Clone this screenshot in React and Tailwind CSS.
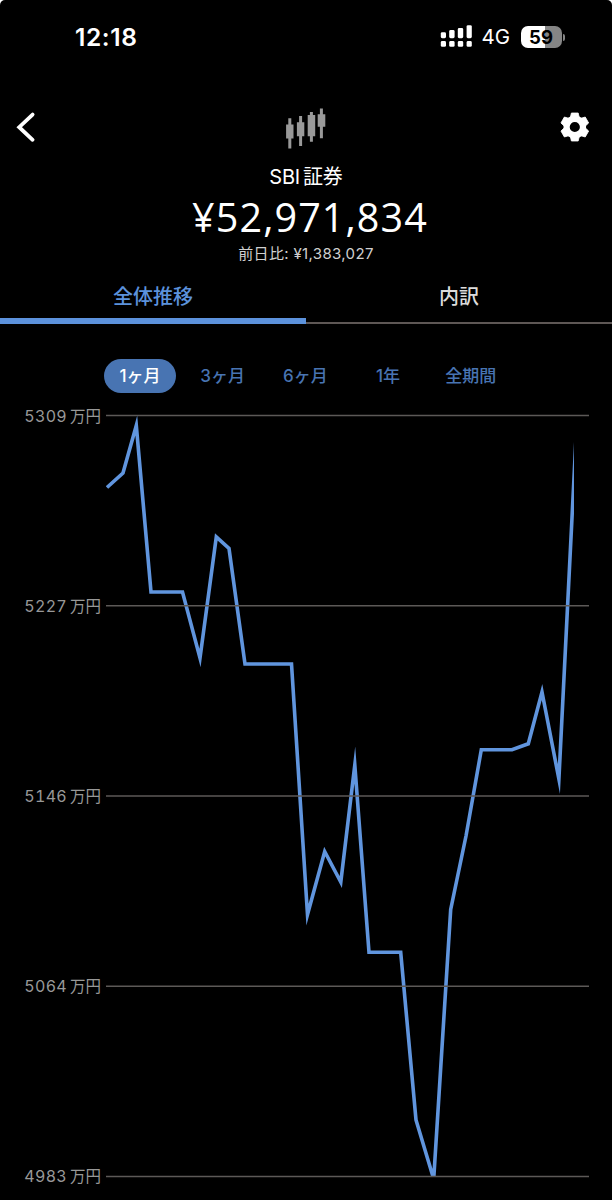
import React from 'react';

const labels = ['5309', '5227', '5146', '5064', '4983'];

const periods = [
  { num: '1', text: 'ヶ月', active: true },
  { num: '3', text: 'ヶ月' },
  { num: '6', text: 'ヶ月' },
  { num: '1', text: '年' },
  { num: '', text: '全期間' },
];

// [x, y] in chart pixels, y grows downwards
const points = [
  [107, 487.5], [123, 473], [136.3, 425.5], [151, 592], [182.5, 592],
  [200, 658], [216.3, 537], [229, 548.5], [245, 664], [291.5, 664],
  [307.5, 914.5], [324.7, 851.5], [340.8, 882], [354.8, 765], [369, 952.3],
  [400.7, 952.3], [416, 1120], [433.7, 1179], [450.7, 909.5], [466, 836],
  [481.3, 749.8], [512, 749.8], [528.3, 743.8], [542, 692], [558.9, 779],
  [576.4, 430],
];

const StatusBar = () => (
  <div className="flex h-[74px] items-center pl-[75px] pr-[47px]">
    <span className="text-[24.5px] font-semibold leading-none tracking-[0.6px]">12:18</span>
    <div className="ml-auto flex items-center">
      <svg className="h-[24px] w-[32px]" viewBox="0 0 32 24" fill="#fff">
        <rect x="0.8" y="7.2" width="5.2" height="6" rx="1.4" />
        <rect x="9.2" y="5" width="5.4" height="8.2" rx="1.4" />
        <rect x="17.8" y="3" width="5.4" height="10.2" rx="1.4" />
        <rect x="26.6" y="0.2" width="5.2" height="13" rx="1.4" />
        <rect x="0.8" y="16" width="5.2" height="5.8" rx="1.4" />
        <rect x="9.2" y="16" width="5.4" height="5.8" rx="1.4" />
        <rect x="17.8" y="16" width="5.4" height="5.8" rx="1.4" />
        <rect x="26.6" y="16" width="5.2" height="5.8" rx="1.4" />
      </svg>
      <span className="ml-[10px] w-[28px] whitespace-nowrap text-[20.5px] leading-none">4G</span>
      <div className="ml-[11px] flex h-[22px] w-[41px] items-center justify-center rounded-[7px] bg-linear-to-r from-white from-59% to-[#858585] to-59% text-[18.5px] font-bold leading-none text-black">
        59
      </div>
      <div className="ml-[1px] h-[7px] w-[2.5px] rounded-r-full bg-[#858585]"></div>
    </div>
  </div>
);

const Header = () => (
  <header className="flex h-[202px] justify-between">
    <div className="w-[56px]">
      <svg className="mt-[37px] h-[34px] w-[38px]" viewBox="0 0 38 34" fill="none" stroke="#fff" strokeWidth="3.8" strokeLinecap="round" strokeLinejoin="miter">
        <path d="M32.6 3.6 L19.2 16.2 L32.6 28.8" />
      </svg>
    </div>

    <div className="flex flex-col items-center">
      <svg className="mt-[34px] h-[42px] w-[40px]" viewBox="0 0 40 42" fill="#999">
        <path d="M2.3 10.2h3v6.2h2.2v14h-2.2v10h-3v-10H.1v-14h2.2z" />
        <path d="M13.1 8h3v6.2h2.2v14h-2.2v9.8h-3v-9.8h-2.2v-14h2.2z" />
        <path d="M23.9 4h3v3h2.3v21.2h-2.3v5.6h-3v-5.6h-2.2V7h2.2z" />
        <path d="M33.9.4h3v5.8h2.4v12.6h-2.4v11.4h-3V18.8h-2.2V6.2h2.2z" />
      </svg>
      <h1 className="flex h-[49px] items-center pt-[4px] text-[20px] leading-none tracking-[-0.2px]">
        SBI<span className="ml-[3px]">証券</span>
      </h1>
      <p className="flex h-[38px] items-center pl-[8px] font-['Open_Sans','Noto_Sans_CJK_JP',sans-serif] text-[39.5px] leading-none tracking-[1.1px]">
        ¥52,971,834
      </p>
      <p className="mt-[4px] flex h-[24px] items-center whitespace-pre text-[15px] leading-none tracking-[0.35px] text-[#d0d0d0]">
        前日比: ¥1,383,027
      </p>
    </div>

    <div className="w-[56px]">
      <svg className="mt-[33px] h-[40px] w-[40px]" viewBox="0 0 40 40">
        <g transform="translate(18.8 20)">
          <circle r="8.2" fill="none" stroke="#fff" strokeWidth="6.2" />
          <g fill="#fff" stroke="#fff" strokeWidth="0.8" strokeLinejoin="round">
            <path d="M-4.6 -9 L-3.4 -14 H3.4 L4.6 -9 Z" />
            <path d="M-4.6 -9 L-3.4 -14 H3.4 L4.6 -9 Z" transform="rotate(60)" />
            <path d="M-4.6 -9 L-3.4 -14 H3.4 L4.6 -9 Z" transform="rotate(120)" />
            <path d="M-4.6 -9 L-3.4 -14 H3.4 L4.6 -9 Z" transform="rotate(180)" />
            <path d="M-4.6 -9 L-3.4 -14 H3.4 L4.6 -9 Z" transform="rotate(240)" />
            <path d="M-4.6 -9 L-3.4 -14 H3.4 L4.6 -9 Z" transform="rotate(300)" />
          </g>
        </g>
      </svg>
    </div>
  </header>
);

const Tabs = () => (
  <nav className="grid h-[48px] grid-cols-2 text-[20px] font-medium leading-[42px]">
    <button className="flex items-start justify-center border-b-[6px] border-[#5c92dc] text-[#5c92dc]">全体推移</button>
    <button className="flex items-start justify-center border-b-2 border-[#5e5755] text-[#dcdcdc]">内訳</button>
  </nav>
);

const Periods = () => (
  <div className="mt-[35px] flex gap-[10.7px] pl-[104px]">
    {periods.map((p, i) => (
      <button
        key={i}
        className={`flex h-[34px] w-[72px] items-center justify-center rounded-full pt-px text-[17px] font-medium leading-none ${
          p.active ? 'bg-[#4874b2] text-white' : 'text-[#4874b2]'
        }`}
      >
        <span>{p.num}</span>
        <span>{p.text}</span>
      </button>
    ))}
  </div>
);

const Chart = () => (
  <section className="mt-[12px] flex">
    <div className="mt-[0.5px] flex h-[781px] w-[101px] flex-col justify-between text-right text-[16px] tabular-nums leading-[20px] tracking-[0.3px] text-[#989898]">
      {labels.map((l) => (
        <div key={l}>
          {l}<span className="ml-[3px] text-[15.5px] tracking-normal">万円</span>
        </div>
      ))}
    </div>
    <svg className="ml-[5px] h-[781px] w-[483px]" viewBox="106 405 483 781">
      <clipPath id="plot">
        <rect x="106" y="405" width="468" height="771" />
      </clipPath>
      <polyline
        points={points.map((p) => p.join(',')).join(' ')}
        fill="none"
        stroke="#6095de"
        strokeWidth="3.6"
        strokeMiterlimit="20"
        clipPath="url(#plot)"
      />
      {/* grid lines are painted over the series */}
      {labels.map((l, i) => (
        <line key={l} x1="106" x2="589" y1={415.4 + i * 190.3} y2={415.4 + i * 190.3} stroke="#5c5957" strokeWidth="1.5" />
      ))}
    </svg>
  </section>
);

const App = () => {
  return (
    <div className="h-[1200px] w-[612px] overflow-hidden bg-white">
      <main className="h-full rounded-t-[5px] bg-black font-['Inter','Noto_Sans_CJK_JP',sans-serif] text-white">
        <StatusBar />
        <Header />
        <Tabs />
        <Periods />
        <Chart />
      </main>
    </div>
  );
};

export default App;
